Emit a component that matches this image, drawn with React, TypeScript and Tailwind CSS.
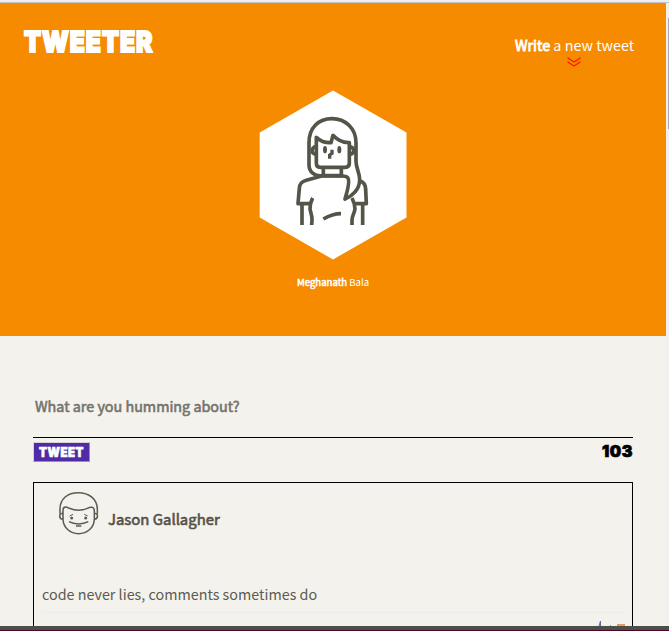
import React from "react";

const body = "font-['Noto_Sans_CJK_SC','Open_Sans',sans-serif]";
const display = "font-['Inter','Lato',sans-serif] font-black";

function ProfileAvatar() {
  return (
    <svg viewBox="250 80 170 190" className="h-[190px] w-[170px]">
      <polygon points="333,90.5 406.5,132.5 406.5,217.5 333,259.5 259.7,217.5 259.7,132.5" fill="#fff" />
      <g transform="translate(285 110) scale(.33333)" fill="none" stroke="#545449" strokeWidth="11" strokeLinejoin="round">
        <path d="M113 197C88 200 72 185 72 164V98C72 53 101 26 141 26S213 55 213 98V155C214 178 224 187 224 209C224 238 202 258 180 267C187 244 195 211 188 203C184 198 176 198 170 198H110L64 211C49 215 44 221 43 235L39 281H77" />
        <path d="M94 82V159Q94 172 106 172H181Q193 172 193 160V98C174 99 157 90 144 76L138 98C121 99 106 93 94 82Z" />
        <path d="M93 110C78 110 77 133 93 133M193 110C210 110 211 133 193 133M115 172V194M169 172V194M110 197H175" />
        <path d="M224 212C238 216 242 226 242 239L244 281H204M51 283V345M233 283V345M83 264C78 273 75 283 75 297C77 309 82 317 81 330L80 345M201 264C206 274 210 284 210 297C208 310 201 318 201 330V345M115 327Q143 311 168 311" />
        <path d="M141 119V130L134 135V146" strokeWidth="10" strokeLinejoin="miter" />
        <ellipse cx="120" cy="119" rx="6" ry="11" fill="#545449" stroke="none" />
        <ellipse cx="163" cy="119" rx="6" ry="11" fill="#545449" stroke="none" />
      </g>
    </svg>
  );
}

function TweetAvatar() {
  return (
    <svg viewBox="0 0 180 165" className="h-[55px] w-[60px] shrink-0" fill="none" stroke="#5c5c53" strokeWidth="4.6">
      <path d="M30 86V72C30 41 53 23 85 23S142 42 142 73V86" />
      <path d="M39 86V77C39 63 48 65 58 70C75 77 96 77 112 70C123 64 133 65 133 78V101C133 128 111 146 86 146S39 128 39 101V86C27 82 25 102 39 103M133 86C145 82 146 102 133 103" />
      <path d="M57 110C73 119 98 119 115 110M78 123H94" />
      <path d="M59 93L69 88M103 88L113 93" strokeWidth="3" />
      <g fill="#5c5c53" stroke="none"><circle cx="65" cy="99" r="4.5" /><circle cx="107" cy="99" r="4.5" /></g>
    </svg>
  );
}

function Header() {
  return (
    <header className="flex h-[333px] w-[666px] flex-col bg-[#f68b00] text-white">
      <nav className="flex h-[77px] justify-between pl-6 pr-8">
        <h1 className={`${display} origin-left scale-x-[.855] pt-[21px] text-[29px] leading-[36px] tracking-[1.1px] [-webkit-text-stroke:1.8px_white]`}>TWEETER</h1>
        <div className="flex w-[119px] flex-col items-center pt-[30px]">
          <span className={`${body} whitespace-nowrap text-[14.35px] leading-6`}><strong className="font-normal [-webkit-text-stroke:.8px_white]">Write</strong> a new tweet</span>
          <svg viewBox="0 0 14 10" className="mr-0.5 h-[10px] w-[14px]" fill="none" stroke="#ff1a00" strokeWidth="1.3"><path d="M.5 .8L7 5L13.5 .8M.5 4.8L7 9L13.5 4.8" /></svg>
        </div>
      </nav>
      <div className="flex flex-col items-center">
        <div className="pl-1"><ProfileAvatar /></div>
        <p className={`${body} mt-1 text-[9.6px] leading-4`}><strong className="font-normal [-webkit-text-stroke:.5px_white]">Meghanath</strong> Bala</p>
      </div>
    </header>
  );
}

export default function App() {
  return (
    <div className="flex h-[631px] w-[669px] flex-col overflow-hidden bg-[#f4f2ed]">
      <div className="h-[3px] shrink-0 border-b border-[#c5c2c7] bg-[#eeedf0]" />
      <div className="flex h-[623px] shrink-0 overflow-hidden">
        <div className="w-[666px] shrink-0">
          <Header />
          <main className="pl-[33px] pr-[33px]">
            <div className={`${body} h-[102px] border-b border-black pl-0.5 pt-[58px] text-[14.35px] leading-6 text-[#74746d] [-webkit-text-stroke:.6px_#74746d]`}>What are you humming about?</div>
            <div className="flex h-11 justify-between pt-1">
              <button className={`${display} h-5 w-[57px] border border-b-[#96949c] border-l-[#d5d3d8] border-r-[#96949c] border-t-[#d5d3d8] bg-[#4f2ca6] text-white`}><span className="block scale-x-[.88] text-[13px] leading-4 tracking-[.6px] [-webkit-text-stroke:.7px_white]">TWEET</span></button>
              <output className={`${display} text-base leading-[18px] tracking-[.6px] text-black [-webkit-text-stroke:.7px_black]`}>103</output>
            </div>
            <article className="flex h-[160px] flex-col border border-black px-[7px] text-[#5b5b50]">
              <div className="flex h-[96px] pl-[9px] pt-[2px]">
                <TweetAvatar />
                <h2 className={`${body} -ml-0.5 pt-[22px] text-[14.9px] font-normal leading-6 text-[#545149] [-webkit-text-stroke:.6px_#545149]`}>Jason Gallagher</h2>
              </div>
              <p className={`${body} h-[34px] border-b border-[#eeedec] pl-px pt-[3px] text-[14.35px] leading-6`}>code never lies, comments sometimes do</p>
              <div className="flex justify-end">
                <svg viewBox="0 0 30 13" className="h-[13px] w-[30px] shrink-0"><path d="M4 13L5.5 8V13" stroke="#5966b5" fill="none" /><path d="M15.5 12V13" stroke="#78a875" /><path d="M22 11H30V13H22Z" fill="#df9b68" /></svg>
              </div>
            </article>
          </main>
        </div>
        <div className="flex w-[3px] justify-end bg-[#f1f0ef] pt-[15px]"><div className="h-[111px] w-px bg-[#a8a8a8]" /></div>
      </div>
      <div className="h-[4px] shrink-0 bg-[#4e4d47]" />
      <div className="h-px shrink-0 bg-[#4a0529]" />
    </div>
  );
}
